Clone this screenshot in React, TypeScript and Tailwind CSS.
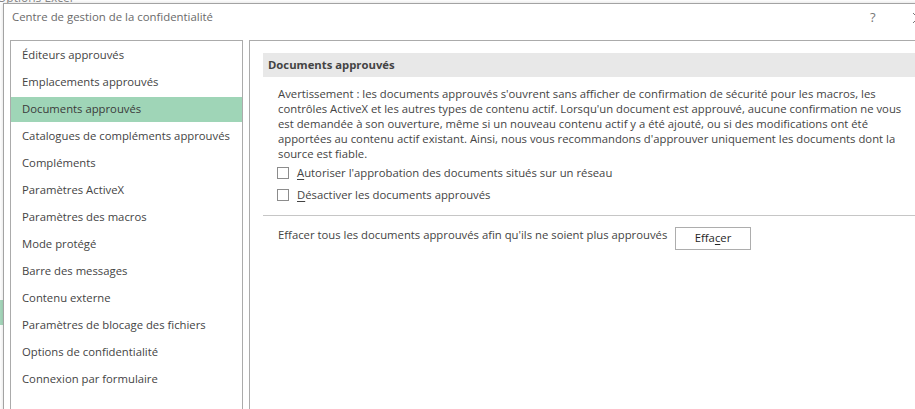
import React from "react";

const items = [
  "Éditeurs approuvés",
  "Emplacements approuvés",
  "Documents approuvés",
  "Catalogues de compléments approuvés",
  "Compléments",
  "Paramètres ActiveX",
  "Paramètres des macros",
  "Mode protégé",
  "Barre des messages",
  "Contenu externe",
  "Paramètres de blocage des fichiers",
  "Options de confidentialité",
  "Connexion par formulaire",
];

const font = { fontFamily: '"Open Sans", "Noto Sans", sans-serif' };

export default function App() {
  return (
    <div
      className="relative w-[915px] h-[409px] overflow-hidden bg-white text-[11.3px] text-[#444444]"
      style={font}
    >
      {/* background window (Options Excel) */}
      <div className="flex flex-col h-full">
        <div className="h-[3px] overflow-hidden relative">
          <div className="-mt-[10px] -ml-[3px] text-[12px] leading-[16px] text-[#8a8a8a]">Options Excel</div>
        </div>
        <div className="flex-1 flex flex-col w-[3px] pt-[297px]">
          <div className="h-[25px] bg-[#a6d8bc]" />
        </div>
      </div>

      {/* dialog window */}
      <div className="absolute left-[3px] top-[3px] w-[960px] h-[480px] bg-white border border-[#a3a3a3] shadow-[0_0_4px_rgba(0,0,0,0.15)] flex flex-col">
        {/* title bar */}
        <div className="h-[36px] flex items-start pt-[5px] pl-[8px]">
          <div className="text-[11.4px] leading-[16px] text-[#6a6a6a] w-[858px]">
            Centre de gestion de la confidentialité
          </div>
          <div className="text-[13px] leading-[16px] text-[#777777] w-[42px]">?</div>
          <svg width="12" height="12" viewBox="0 0 12 12" className="mt-[3px]">
            <path d="M1 1 L11 11 M11 1 L1 11" stroke="#777777" strokeWidth="1" fill="none" />
          </svg>
        </div>

        {/* body */}
        <div className="flex-1 flex gap-[6px] pl-[6px]">
          {/* left list */}
          <div className="w-[233px] border border-[#ababab] flex flex-col pt-[1px]">
            {items.map((t) => (
              <div key={t} className="h-[27px] flex flex-col justify-center">
                <div
                  className={
                    "h-[25px] flex items-center pl-[11px] " +
                    (t === "Documents approuvés" ? "bg-[#9fd5b7] text-[#3a3a3a]" : "")
                  }
                >
                  {t}
                </div>
              </div>
            ))}
          </div>

          {/* right panel */}
          <div className="flex-1 border border-[#ababab] pt-[12px] pl-[13px] flex flex-col">
            <div className="w-[652px] h-[24px] bg-[#e8e8e8] pl-[5px] flex items-center font-bold text-[#444444]">
              Documents approuvés
            </div>
            <div className="ml-[15px] mt-[9px] leading-[15px] text-[#444444]">
              Avertissement : les documents approuvés s'ouvrent sans afficher de confirmation de sécurité pour les macros, les
              <br />
              contrôles ActiveX et les autres types de contenu actif. Lorsqu'un document est approuvé, aucune confirmation ne vous
              <br />
              est demandée à son ouverture, même si un nouveau contenu actif y a été ajouté, ou si des modifications ont été
              <br />
              apportées au contenu actif existant. Ainsi, nous vous recommandons d'approuver uniquement les documents dont la
              <br />
              source est fiable.
            </div>
            <div className="mt-[1px] flex flex-col">
              <div className="h-[22px] flex items-center ml-[14px] gap-[8px]">
                <div className="w-[12px] h-[12px] border border-[#8c8c8c] bg-white" />
                <span>
                  <span className="underline underline-offset-2">A</span>utoriser l'approbation des documents situés sur un réseau
                </span>
              </div>
              <div className="h-[22px] flex items-center ml-[14px] gap-[8px]">
                <div className="w-[12px] h-[12px] border border-[#8c8c8c] bg-white" />
                <span>
                  <span className="underline underline-offset-2">D</span>ésactiver les documents approuvés
                </span>
              </div>
            </div>
            <div className="mt-[9px] h-px w-[660px] bg-[#c6c6c6]" />
            <div className="mt-[11px] flex items-start">
              <div className="ml-[15px] w-[397px] leading-[15px]">
                Effacer tous les documents approuvés afin qu'ils ne soient plus approuvés
              </div>
              <div className="w-[76px] h-[23px] border border-[#adadad] bg-white flex items-center justify-center text-[#262626]">
                <span>
                  Effa<span className="underline underline-offset-2">c</span>er
                </span>
              </div>
            </div>
          </div>
        </div>
      </div>
    </div>
  );
}
